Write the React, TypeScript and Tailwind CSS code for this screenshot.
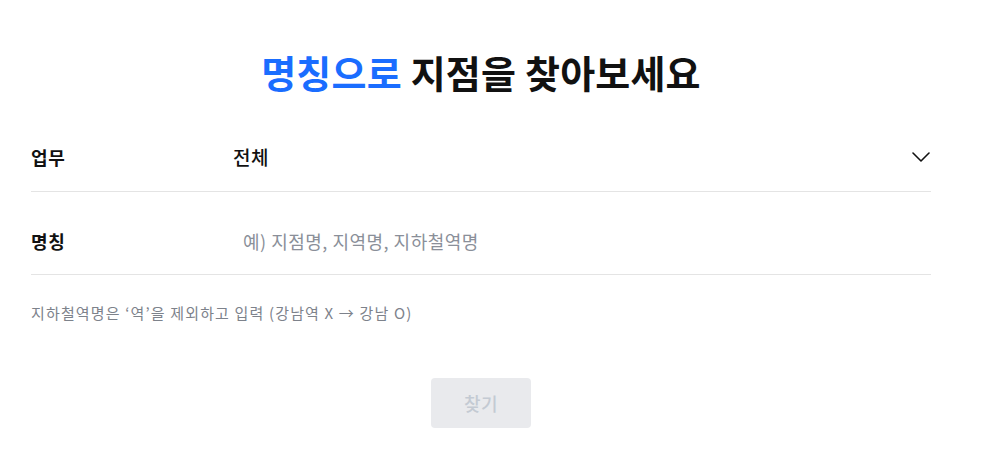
const font = { fontFamily: '"Noto Sans CJK KR", "Noto Sans", sans-serif' };

function Chevron() {
  return (
    <svg width="18" height="10" viewBox="0 0 18 10" fill="none" className="mr-[1px]">
      <path d="M1 1l8 8 8-8" stroke="#111" strokeWidth="1.6" strokeLinecap="round" strokeLinejoin="round" />
    </svg>
  );
}

export default function App() {
  return (
    <div className="min-h-[452px] bg-white" style={font}>
      <div className="ml-[31px] w-[900px]">
        <h1 className="pt-[48px] h-[96px] text-center text-[38px] leading-[48px] font-bold tracking-[0.2px] text-[#111]">
          <span className="text-[#1a6dff]">명칭으로</span> 지점을 찾아보세요
        </h1>

        <div className="mt-[27px] flex h-[69px] items-center border-b border-[#e4e4e4]">
          <div className="w-[202px] text-[18px] font-semibold tracking-[0.6px] text-[#111]">업무</div>
          <div className="flex-1 text-[19px] font-medium tracking-[0.6px] text-[#111]">전체</div>
          <Chevron />
        </div>

        <div className="flex h-[83px] items-center border-b border-[#e4e4e4] pt-[16px]">
          <div className="w-[202px] text-[18px] font-semibold tracking-[0.6px] text-[#111]">명칭</div>
          <input
            className="flex-1 bg-transparent pl-[10px] text-[18px] tracking-[0.5px] text-[#111] outline-none placeholder:text-[#8a8f99]"
            placeholder="예) 지점명, 지역명, 지하철역명"
            style={font}
          />
        </div>

        <p className="mt-[28px] text-[15px] leading-[20px] tracking-[1.15px] text-[#7d828b]">
          지하철역명은 ‘역’을 제외하고 입력 (강남역 X → 강남 O)
        </p>

        <div className="mt-[55px] flex justify-center">
          <button
            disabled
            className="h-[50px] w-[100px] rounded-[4px] bg-[#e9eaed] text-[18px] font-medium tracking-[0.5px] text-[#c4cad3]"
            style={font}
          >
            찾기
          </button>
        </div>
      </div>
    </div>
  );
}
